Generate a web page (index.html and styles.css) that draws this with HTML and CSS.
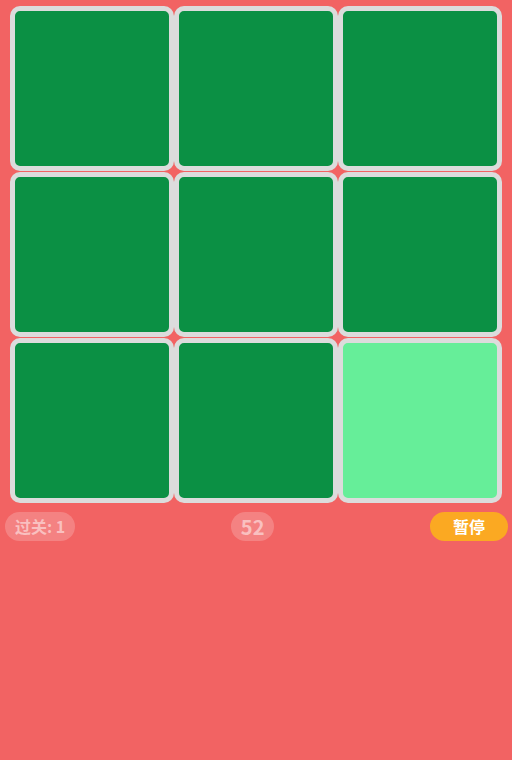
FILE: index.html
```html
<!DOCTYPE html>
<html lang="zh">
<head>
  <meta charset="UTF-8" />
  <meta name="viewport" content="width=device-width, initial-scale=1.0" />
  <title>找不同颜色</title>
  <link rel="stylesheet" href="styles.css">
</head>
<body>
  <div class="board">
    <div class="block"></div>
    <div class="block"></div>
    <div class="block"></div>
    <div class="block"></div>
    <div class="block"></div>
    <div class="block"></div>
    <div class="block"></div>
    <div class="block"></div>
    <div class="block odd"></div>
  </div>
  <div class="bar">
    <span class="pill level">过关: 1</span>
    <span class="pill time">52</span>
    <span class="pill pause">暂停</span>
  </div>
</body>
</html>
```

FILE: styles.css
```css
body {
  margin: 0;
  background-color: #f26363;
  font-family: "Noto Sans CJK SC", "Noto Sans", sans-serif;
  width: 512px;
  height: 760px;
}

.board {
  display: grid;
  grid-template-columns: repeat(3, 164px);
  grid-auto-rows: 165px;
  row-gap: 1px;
  margin: 6px 0 0 10px;
}

.block {
  background-color: #0b9044;
  border: 5px solid #dcdcdc;
  border-radius: 10px;
  box-sizing: border-box;
}

.block.odd {
  background-color: #66ee99;
}

.bar {
  display: flex;
  justify-content: space-between;
  align-items: center;
  margin-top: 9px;
  padding: 0 4px 0 5px;
}

.pill {
  height: 29px;
  line-height: 29px;
  border-radius: 15px;
  font-weight: bold;
  padding: 0 10px;
  font-size: 16px;
  color: rgba(255, 255, 255, 0.5);
  background-color: rgba(255, 255, 255, 0.2);
}

.time {
  font-size: 20px;
  padding: 0 10px;
}

.pause {
  color: #fff;
  background-color: #fba922;
  padding: 0 23px;
}
```
